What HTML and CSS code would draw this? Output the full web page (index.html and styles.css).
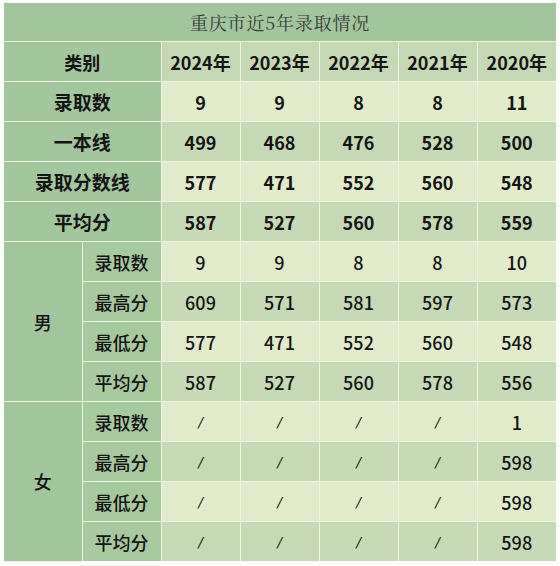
FILE: index.html
```html
<!DOCTYPE html>
<html lang="zh">
<head>
<meta charset="utf-8">
<link rel="stylesheet" href="styles.css">
</head>
<body>
<div class="wrap">
<table class="t">
  <colgroup>
    <col class="c-g"><col class="c-s"><col class="c-y"><col class="c-y"><col class="c-y"><col class="c-y"><col class="c-y">
  </colgroup>
  <tr class="title"><td colspan="7">重庆市近5年录取情况</td></tr>
  <tr class="head">
    <th colspan="2" class="lab">类别</th>
    <th>2024年</th><th>2023年</th><th>2022年</th><th>2021年</th><th>2020年</th>
  </tr>
  <tr class="light bold"><th colspan="2" class="lab">录取数</th><td>9</td><td>9</td><td>8</td><td>8</td><td>11</td></tr>
  <tr class="dark bold"><th colspan="2" class="lab">一本线</th><td>499</td><td>468</td><td>476</td><td>528</td><td>500</td></tr>
  <tr class="light bold"><th colspan="2" class="lab">录取分数线</th><td>577</td><td>471</td><td>552</td><td>560</td><td>548</td></tr>
  <tr class="dark bold"><th colspan="2" class="lab">平均分</th><td>587</td><td>527</td><td>560</td><td>578</td><td>559</td></tr>
  <tr class="light"><th rowspan="4" class="lab grp">男</th><th class="lab sub">录取数</th><td>9</td><td>9</td><td>8</td><td>8</td><td>10</td></tr>
  <tr class="dark"><th class="lab sub">最高分</th><td>609</td><td>571</td><td>581</td><td>597</td><td>573</td></tr>
  <tr class="light"><th class="lab sub">最低分</th><td>577</td><td>471</td><td>552</td><td>560</td><td>548</td></tr>
  <tr class="dark"><th class="lab sub">平均分</th><td>587</td><td>527</td><td>560</td><td>578</td><td>556</td></tr>
  <tr class="light"><th rowspan="4" class="lab grp">女</th><th class="lab sub">录取数</th><td class="na">/</td><td class="na">/</td><td class="na">/</td><td class="na">/</td><td>1</td></tr>
  <tr class="dark"><th class="lab sub">最高分</th><td class="na">/</td><td class="na">/</td><td class="na">/</td><td class="na">/</td><td>598</td></tr>
  <tr class="light"><th class="lab sub">最低分</th><td class="na">/</td><td class="na">/</td><td class="na">/</td><td class="na">/</td><td>598</td></tr>
  <tr class="dark"><th class="lab sub">平均分</th><td class="na">/</td><td class="na">/</td><td class="na">/</td><td class="na">/</td><td>598</td></tr>
</table>
</div>
</body>
</html>
```
FILE: styles.css
```css
html, body {
  margin: 0;
  padding: 0;
  background: #ffffff;
}
.wrap {
  padding: 3px 4px 0 4px;
}
.t {
  border-collapse: collapse;
  table-layout: fixed;
  width: 552px;
  font-family: "Noto Sans CJK SC", "Noto Sans", sans-serif;
  font-size: 18px;
  color: #141414;
}
.c-g { width: 78px; }
.c-s { width: 79px; }
.c-y { width: 79px; }
.t td, .t th {
  border: 1.5px solid #eef4e2;
  text-align: center;
  vertical-align: middle;
  padding: 0;
  height: 39px;
  font-weight: 500;
  line-height: 1;
}
.t tr:first-child td { border-top: none; }
.t td:first-child, .t th:first-child { border-left: none; }
.t td:last-child, .t th:last-child { border-right: none; }
.t tr:last-child td, .t tr:last-child th { border-bottom: none; }
.title td {
  height: 38px;
  background: #a1c69c;
  font-family: "Noto Serif CJK SC", "Noto Sans CJK SC", serif;
  font-size: 18px;
  font-weight: 400;
  color: #3a3a3a;
  letter-spacing: 0.8px;
}
.head th {
  background: #c4d9b3;
  font-weight: 700;
}
.head th.lab { background: #a3c79d; }
.lab {
  background: #a3c79d;
}
.bold td, .bold th.lab { font-weight: 700; }
.bold th.lab { font-size: 19px; }
.head th.lab { font-weight: 700; }
.light td { background: #e1ebca; }
.dark td { background: #c5d9b4; }
.grp { background: #a2c69c; }
.sub { background: #a6c99d; }
.na {
  font-family: "DejaVu Sans", sans-serif;
  font-size: 14px;
  font-weight: 400;
  color: #222;
  font-style: italic;
}
```
